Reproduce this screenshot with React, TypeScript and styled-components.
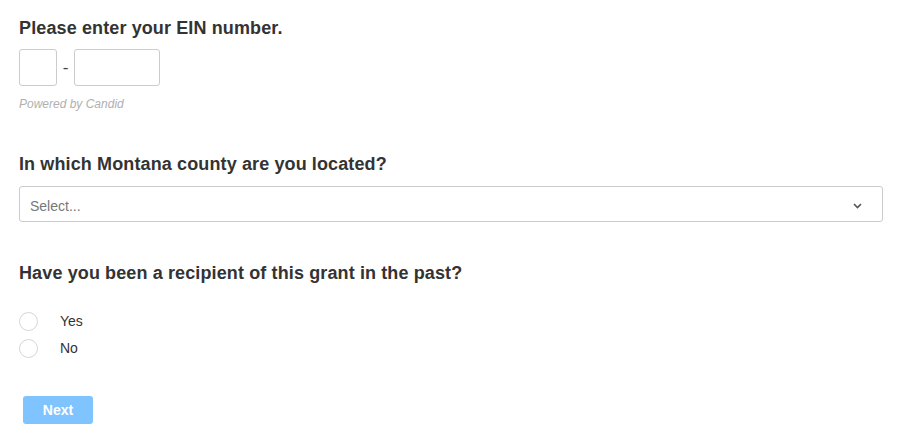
import React, { useState } from 'react';
import styled, { createGlobalStyle } from 'styled-components';

const GlobalStyle = createGlobalStyle`
  html, body {
    margin: 0;
    padding: 0;
    background: #fff;
    font-family: "Liberation Sans", Arial, sans-serif;
    color: #333;
  }
`;

const Page = styled.div`
  width: 864px;
  padding: 18px 17px 0 19px;
`;

const Section = styled.section<{ gap?: number }>`
  margin-top: ${(p) => p.gap ?? 0}px;
`;

const Question = styled.h2`
  margin: 0;
  font-size: 18px;
  letter-spacing: 0.12px;
  line-height: 20px;
  font-weight: 700;
  color: #333;
`;

const EinRow = styled.div`
  display: flex;
  align-items: center;
  margin-top: 11px;
`;

const EinBox = styled.input<{ w: number }>`
  box-sizing: border-box;
  width: ${(p) => p.w}px;
  height: 37px;
  border: 1px solid #ccc;
  border-radius: 3px;
  padding: 0 6px;
  font-size: 14px;
  font-family: inherit;
  outline: none;
`;

const Dash = styled.span`
  width: 17px;
  text-align: center;
  font-size: 17px;
  color: #444;
`;

const Powered = styled.div`
  margin-top: 11px;
  font-size: 12px;
  line-height: 14px;
  font-style: italic;
  color: #b0b0b0;
`;

const SelectBox = styled.div`
  box-sizing: border-box;
  margin-top: 12px;
  height: 36px;
  border: 1px solid #ccc;
  border-radius: 3px;
  display: flex;
  align-items: center;
  justify-content: space-between;
  padding: 3px 20px 0 10px;
  cursor: pointer;
`;

const Placeholder = styled.span`
  font-size: 14px;
  color: #777;
`;

const RadioList = styled.div`
  margin-top: 27px;
  display: flex;
  flex-direction: column;
  gap: 5px;
`;

const RadioRow = styled.label`
  display: flex;
  align-items: center;
  height: 22px;
  cursor: pointer;
`;

const Circle = styled.span<{ on: boolean }>`
  box-sizing: border-box;
  width: 19px;
  height: 19px;
  border-radius: 50%;
  border: 1px solid #d6d6d6;
  background: ${(p) => (p.on ? '#7fc4ff' : '#fff')};
`;

const RadioText = styled.span`
  margin-left: 22px;
  font-size: 14px;
  color: #333;
`;

const NextButton = styled.button`
  margin: 37px 0 0 4px;
  width: 70px;
  height: 28px;
  border: none;
  border-radius: 3px;
  background: #80c4ff;
  color: #fff;
  font-family: inherit;
  font-weight: 700;
  font-size: 14px;
  cursor: pointer;
`;

const Chevron = () => (
  <svg width="9" height="6" viewBox="0 0 9 6">
    <path d="M1 1 L4.5 4.5 L8 1" fill="none" stroke="#555" strokeWidth="1.6" />
  </svg>
);

export default function App() {
  const [choice, setChoice] = useState<string | null>(null);
  return (
    <>
      <GlobalStyle />
      <Page>
        <Section>
          <Question>Please enter your EIN number.</Question>
          <EinRow>
            <EinBox w={38} />
            <Dash>-</Dash>
            <EinBox w={86} />
          </EinRow>
          <Powered>Powered by Candid</Powered>
        </Section>
        <Section gap={43}>
          <Question>In which Montana county are you located?</Question>
          <SelectBox>
            <Placeholder>Select...</Placeholder>
            <Chevron />
          </SelectBox>
        </Section>
        <Section gap={41}>
          <Question>Have you been a recipient of this grant in the past?</Question>
          <RadioList>
            {['Yes', 'No'].map((o) => (
              <RadioRow key={o} onClick={() => setChoice(o)}>
                <Circle on={choice === o} />
                <RadioText>{o}</RadioText>
              </RadioRow>
            ))}
          </RadioList>
        </Section>
        <NextButton>Next</NextButton>
      </Page>
    </>
  );
}
